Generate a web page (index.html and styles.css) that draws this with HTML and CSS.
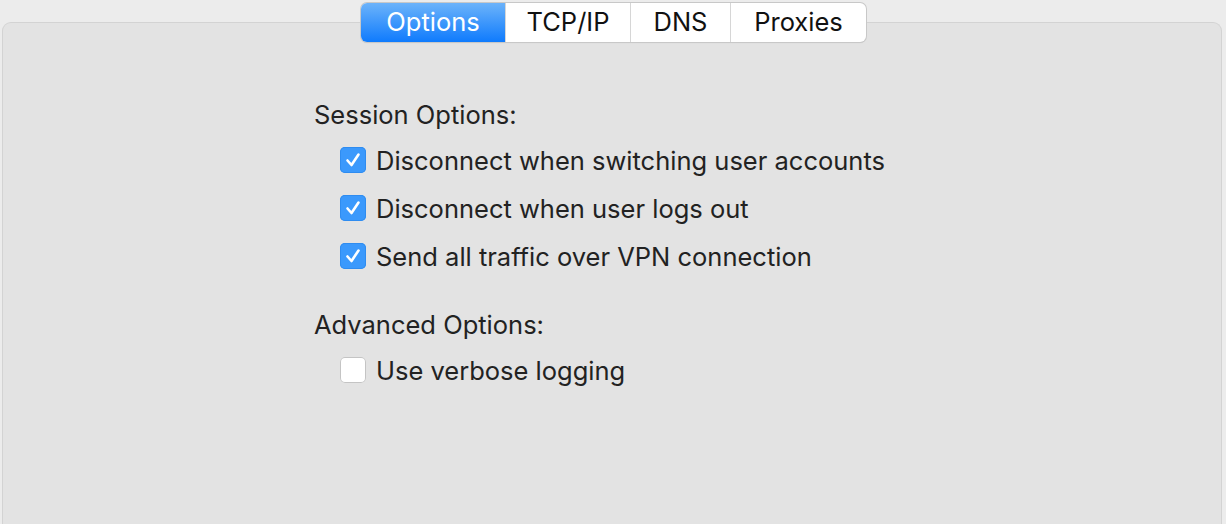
FILE: index.html
```html
<!DOCTYPE html>
<html>
<head>
<meta charset="utf-8">
<link rel="stylesheet" href="styles.css">
</head>
<body>
<div class="window">
  <div class="tabs">
    <div class="tab active">Options</div>
    <div class="tab">TCP/IP</div>
    <div class="tab">DNS</div>
    <div class="tab">Proxies</div>
  </div>
  <div class="panel">
    <div class="content">
      <div class="section-title">Session Options:</div>
      <label class="row"><span class="box checked"><svg viewBox="0 0 26 26" width="26" height="26"><path d="M7.5 13.5 L11.5 18 L18.5 7.5" fill="none" stroke="#fff" stroke-width="2.6" stroke-linecap="round" stroke-linejoin="round"/></svg></span><span class="label">Disconnect when switching user accounts</span></label>
      <label class="row"><span class="box checked"><svg viewBox="0 0 26 26" width="26" height="26"><path d="M7.5 13.5 L11.5 18 L18.5 7.5" fill="none" stroke="#fff" stroke-width="2.6" stroke-linecap="round" stroke-linejoin="round"/></svg></span><span class="label">Disconnect when user logs out</span></label>
      <label class="row"><span class="box checked"><svg viewBox="0 0 26 26" width="26" height="26"><path d="M7.5 13.5 L11.5 18 L18.5 7.5" fill="none" stroke="#fff" stroke-width="2.6" stroke-linecap="round" stroke-linejoin="round"/></svg></span><span class="label">Send all traffic over VPN connection</span></label>
      <div class="section-title second">Advanced Options:</div>
      <label class="row"><span class="box"></span><span class="label">Use verbose logging</span></label>
    </div>
  </div>
</div>
</body>
</html>
```

FILE: styles.css
```css
* { box-sizing: border-box; }
html, body { margin: 0; height: 100%; }
body {
  background: #ececec;
  font-family: "Inter", "Liberation Sans", sans-serif;
  color: #222;
  overflow: hidden;
}
.window {
  position: relative;
  padding: 22px 4px 0 2px;
  height: 100%;
}
.panel {
  background: #e3e3e3;
  border: 1px solid #d3d3d3;
  border-bottom: none;
  border-radius: 9px 9px 0 0;
  height: 520px;
  padding-top: 76px;
  padding-left: 311px;
}
.tabs {
  position: absolute;
  top: 3px;
  left: 361px;
  display: flex;
  height: 39px;
  background: #fff;
  border-radius: 6px;
  box-shadow: 0 0 0 1px #c8c8c8, 0 1px 1px rgba(0,0,0,0.12);
}
.tab {
  font-size: 25.5px;
  display: flex;
  align-items: center;
  justify-content: center;
  color: #111;
  border-left: 1px solid #d6d6d6;
  padding-bottom: 2px;
}
.tab:nth-child(1) { width: 144px; border-left: none; }
.tab:nth-child(2) { width: 125px; }
.tab:nth-child(3) { width: 100px; }
.tab:nth-child(4) { width: 136px; }
.tab.active {
  color: #fff;
  background: linear-gradient(#6cb3fa, #0f7bfd);
  border-radius: 6px 0 0 6px;
}
.content { display: flex; flex-direction: column; }
.section-title {
  font-size: 25.5px;
  height: 32px;
  line-height: 32px;
  color: #222;
  margin-bottom: 5px;
}
.section-title.second { margin-top: 29px; }
.row {
  display: flex;
  align-items: center;
  height: 48px;
  padding-left: 26px;
}
.box {
  width: 26px;
  height: 26px;
  border-radius: 5px;
  background: #fff;
  box-shadow: inset 0 0 0 1px #c4c4c4;
  margin-right: 10px;
  flex: none;
  display: flex;
}
.box.checked {
  background: #3b99fc;
  box-shadow: inset 0 0 0 1px #2f8cf0;
}
.label { font-size: 25.5px; color: #222; }
```
